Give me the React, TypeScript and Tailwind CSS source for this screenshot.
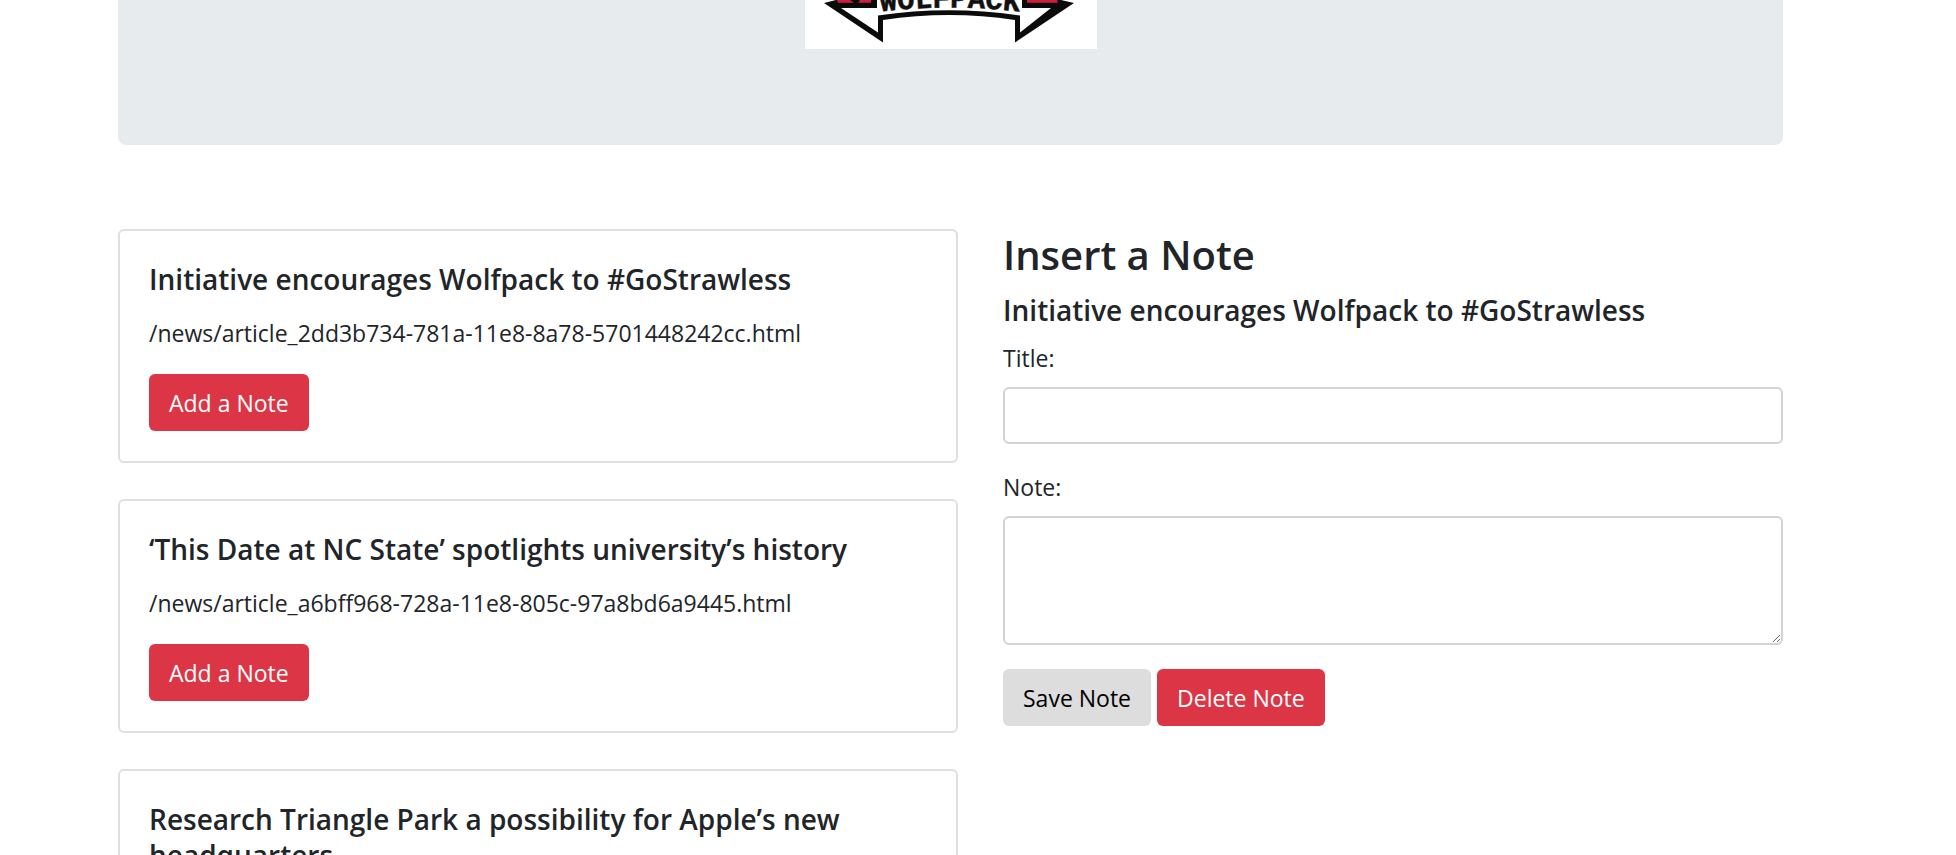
import { useState } from "react";

type Article = { title: string; link: string };

const articles: Article[] = [
  {
    title: "Initiative encourages Wolfpack to #GoStrawless",
    link: "/news/article_2dd3b734-781a-11e8-8a78-5701448242cc.html",
  },
  {
    title: "‘This Date at NC State’ spotlights university’s history",
    link: "/news/article_a6bff968-728a-11e8-805c-97a8bd6a9445.html",
  },
  {
    title: "Research Triangle Park a possibility for Apple’s new headquarters",
    link: "",
  },
];

function Logo() {
  return (
    <svg
      viewBox="0 0 292 49"
      className="block h-[49px] w-[292px] bg-white"
      role="img"
      aria-label="Wolfpack"
    >
      <defs>
        <path id="banner-arc" d="M72 12 Q145 3 218 12" />
      </defs>
      {/* ribbon outline */}
      <path
        d="M19 3 L78 42.500 V20 Q144 10 210 20 V42.500 L269 3 L256 0 H31 Z"
        fill="#0b0b0b"
      />
      {/* ribbon face */}
      <path
        d="M36 8 L73 32.500 V15.500 Q144 5 215 15.500 V32.500 L246 8 H217 V0 H72 V8 Z"
        fill="#fff"
      />
      <path d="M32 0 H45 L49 2.800 H33 Z" fill="#cf1f3f" />
      <path d="M55 0 H66 V2.800 H53 Z" fill="#cf1f3f" />
      <path d="M222 0 H252 L253 2.800 H222 Z" fill="#cf1f3f" />
      <text
        className="font-['Liberation_Mono',monospace] font-bold"
        fontSize="29"
        fill="#111"
        stroke="#111"
        strokeWidth="0.5"
        textAnchor="middle"
      >
        <textPath href="#banner-arc" startOffset="50%">
          WOLFPACK
        </textPath>
      </text>
    </svg>
  );
}

function ArticleCard({ article, onAdd }: { article: Article; onAdd: () => void }) {
  return (
    <article className="rounded-md border-2 border-[#dfdfdf] px-[29px] py-[30px]">
      <h5 className="mb-[18px] text-[28px] leading-9 font-semibold">{article.title}</h5>
      {article.link && <p className="mb-[23px] leading-9">{article.link}</p>}
      <button
        type="button"
        onClick={onAdd}
        className="block h-[57px] rounded-md bg-[#dc3545] px-5 pt-0.5 text-white"
      >
        Add a Note
      </button>
    </article>
  );
}

export default function App() {
  const [selected, setSelected] = useState(articles[0]);
  const [title, setTitle] = useState("");
  const [note, setNote] = useState("");

  const clear = () => {
    setTitle("");
    setNote("");
  };

  return (
    <div className="h-screen overflow-hidden bg-white pr-[173px] pl-[118px] font-['Open_Sans','Noto_Sans',sans-serif] text-[23px] text-[#212529]">
      <header className="flex justify-center rounded-b-lg bg-[#e7ebee] pb-24">
        <Logo />
      </header>

      <main className="mt-[84px] grid grid-cols-[14fr_13fr] items-start gap-[45px]">
        <section className="flex flex-col gap-9">
          {articles.map((article) => (
            <ArticleCard
              key={article.title}
              article={article}
              onAdd={() => setSelected(article)}
            />
          ))}
        </section>

        <form className="pt-px" onSubmit={(event) => event.preventDefault()}>
          <h2 className="mb-3 text-[40px] leading-[50px] font-semibold">Insert a Note</h2>
          <h5 className="mb-3 text-[28px] leading-9 font-semibold">{selected.title}</h5>
          <label htmlFor="note-title" className="mb-[11px] block leading-9">
            Title:
          </label>
          <input
            id="note-title"
            type="text"
            value={title}
            onChange={(event) => setTitle(event.target.value)}
            className="mb-[25px] block h-[57px] w-full rounded-md border-2 border-[#d2d3d5] px-4"
          />
          <label htmlFor="note-body" className="mb-[11px] block leading-9">
            Note:
          </label>
          <textarea
            id="note-body"
            value={note}
            onChange={(event) => setNote(event.target.value)}
            className="mb-6 block h-[129px] w-full resize rounded-md border-2 border-[#d2d3d5] px-4 py-2"
          />
          <div className="flex gap-1.5">
            <button type="submit" className="h-[57px] rounded-md bg-[#dddddd] px-5 pt-0.5 text-black">
              Save Note
            </button>
            <button
              type="button"
              onClick={clear}
              className="h-[57px] rounded-md bg-[#dc3545] px-5 pt-0.5 text-white"
            >
              Delete Note
            </button>
          </div>
        </form>
      </main>
    </div>
  );
}
